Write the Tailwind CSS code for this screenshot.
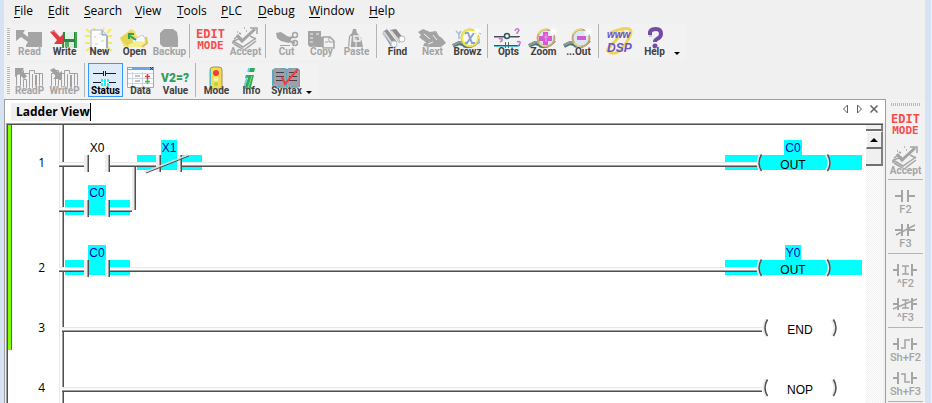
<!DOCTYPE html>
<html lang="en">
<head>
<meta charset="utf-8">
<title>Ladder View</title>
<script src="https://cdn.jsdelivr.net/npm/@tailwindcss/browser@4"></script>
</head>
<body class="h-screen overflow-hidden bg-[#f0f0f0] border-l-4 border-[#d6e3f2] flex flex-col font-['Open_Sans','Noto_Sans',sans-serif] text-black">

<svg class="hidden" aria-hidden="true">
  <symbol id="accept" viewBox="0 0 35 34">
    <g fill="none" stroke="#a4a4a4">
      <path d="M6 15l4-3M11 9l2 1M5 17l9-3M5 17l10 6 13-9M6 20l10 6 12-9M5 17v3M22 12l6 3" stroke-width="1.5"/>
      <path d="M9 11l5 6L27 5" stroke-width="3"/>
      <path d="M22 4h7v6" stroke-width="1.5"/>
      <path d="M16 4h1M9 8h1M18 7h1" stroke-width="1.5"/>
    </g>
  </symbol>
  <symbol id="book" viewBox="0 0 35 34">
    <path d="M4.500 10.500h3v-3h4v3h6v-3h5v3h8v16h-26z" fill="#f2f2f2" stroke="#a0a0a0"/>
    <path d="M8.500 11v16M11.500 16.500h3v10h-3zM17.500 8v19M20.500 11v16M27.500 11v16" fill="none" stroke="#a0a0a0"/>
    <path d="M23 12h2v14h-2z" fill="#a0a0a0"/>
  </symbol>
  <symbol id="lens" viewBox="0 0 35 34">
    <path d="M3 22l6-3 4 1 3-2" fill="none" stroke="#457b7b" stroke-width="4"/>
    <path d="M3 21l7-3 3 1" fill="none" stroke="#999" stroke-width="2"/>
    <path d="M13 22q9 4 16-5" fill="none" stroke="#417c78" stroke-width="2"/>
    <circle cx="20" cy="14" r="8.5" fill="#d9e8f4" stroke="#c6a878" stroke-width="2"/>
    <path d="M12 10q3-5 9-5M13 19q3 3 7 3" fill="none" stroke="#e6da7a" stroke-width="1.5"/>
    <path d="M27 4v8M23 8h8M24 5l6 6M30 5l-6 6" stroke="#fff" stroke-width="1.5"/>
  </symbol>
  <symbol id="bracketL" viewBox="0 0 7 18">
    <path d="M4.500 0.500Q-0.500 9 4.500 17" fill="none" stroke="#e8e8e8" stroke-width="3"/>
    <path d="M5.500 0.500Q0.500 9 5.500 17" fill="none" stroke="#505050" stroke-width="1.500"/>
  </symbol>
  <symbol id="bracketR" viewBox="0 0 7 18">
    <path d="M1.500 0.500Q6.500 9 1.500 17" fill="none" stroke="#e8e8e8" stroke-width="3"/>
    <path d="M2.500 0.500Q7.500 9 2.500 17" fill="none" stroke="#505050" stroke-width="1.500"/>
  </symbol>
  <symbol id="contact" viewBox="0 0 26 17">
    <path d="M0 0h3v17H0zM21 0h3v17h-3z" fill="#eee"/>
    <path d="M3 0h1v17H3zM24 0h1v17h-1z" fill="#a0a0a0"/>
    <path d="M4 0h1v17H4zM25 0h1v17h-1z" fill="#505050"/>
  </symbol>
  <symbol id="wire" viewBox="0 0 10 5" preserveAspectRatio="none">
    <path d="M0 0h10v1H0z" fill="#e8e8e8"/><path d="M0 1h10v2H0z" fill="#fbfbfb"/>
    <path d="M0 3h10v1H0z" fill="#a0a0a0"/><path d="M0 4h10v1H0z" fill="#505050"/>
  </symbol>
</svg>

<nav aria-label="Menu" class="h-6 shrink-0 pl-[2px] pb-[2px] flex items-center text-[12px] [&_button]:px-2 [&_button]:whitespace-nowrap [&_u]:underline [&_u]:decoration-1 [&_u]:underline-offset-2">
  <button class="w-[34px]"><u>F</u>ile</button>
  <button class="w-9"><u>E</u>dit</button>
  <button class="w-[51px]"><u>S</u>earch</button>
  <button class="w-[42px]"><u>V</u>iew</button>
  <button class="w-11"><u>T</u>ools</button>
  <button class="w-[37px]"><u>P</u>LC</button>
  <button class="w-[51px]"><u>D</u>ebug</button>
  <button class="w-[60px]"><u>W</u>indow</button>
  <button class="w-10"><u>H</u>elp</button>
</nav>

<div role="toolbar" aria-label="Main" class="self-start shrink-0 h-9 pl-[3px] pr-[6px] rounded bg-[#f2f2f2] flex items-start font-['Roboto',sans-serif] font-bold text-[10px] leading-[10px] text-[#404040] [&_button]:grid [&_button]:w-[35px] [&_button]:h-[34px] [&_button]:justify-items-center [&_button>*]:col-start-1 [&_button>*]:row-start-1 [&_span]:self-end [&_span]:mb-[1px] [&_span]:[text-shadow:0_0_1px_#f2f2f2,0_0_2px_#f2f2f2] [&_hr]:h-[34px] [&_hr]:w-px [&_hr]:border-0 [&_hr]:bg-[#b4b4b4] [&_hr]:ml-[2px] [&_hr]:mr-[3px]">
  <i class="w-[3px] h-[27px] mt-1 mr-[2px] bg-[repeating-linear-gradient(#b8b8b8_0_1px,#f2f2f2_1px_2px)]"></i>
  <button disabled class="text-[#a4a4a4]"><svg viewBox="0 0 35 34"><path fill="#a4a4a4" d="M4 6h9l-2 3 5 4V8h14v15H14v-2l2-3-7-5-5 4z"/></svg><span>Read</span></button>
  <button><svg viewBox="0 0 35 34"><path d="M16 8h14v16H15z" fill="#248a3c"/><path d="M18 8h9v7h-9z" fill="#e4efe7"/><path d="M17 18h10v6H17z" fill="#d8ead9"/><path d="M18 18h4v5h-4z" fill="#56ad62"/><path d="M29 8v16" stroke="#5dc073"/><path d="M3 8l4-2 6 7 3-3v10H7l3-4z" fill="#e23b42"/><path d="M4 8l3-1 6 6" stroke="#f58a88" fill="none"/></svg><span>Write</span></button>
  <button><svg viewBox="0 0 35 34"><path d="M4 5l5 4M3 12h5M3 19h5M4 27l5-4M12 4l1 3M22 4l-1 3M29 5l-4 4M30 12h-4M30 19h-4M30 27l-5-4" stroke="#f7ea58" stroke-width="2"/><path d="M9 6h11l5 5v15H9z" fill="#fcfcff" stroke="#a9b5c7"/><path d="M20 6v5h5" fill="#d7e2f2" stroke="#8090aa"/><path d="M12 13h2M17 10h2M19 17h3M13 20h3" stroke="#c4cfdf"/><path d="M25 12v12" stroke="#7b8ba4"/></svg><span>New</span></button>
  <button><svg viewBox="0 0 35 34"><path d="M3 14L14 5l4 2 2 5v11H7z" fill="#f0e26a"/><path d="M3 14l11-7 7 11-10 5z" fill="#e5d354"/><path d="M15 16l11-5 3 6-10 6z" fill="#f8fbfb" stroke="#c5d1cf"/><path d="M11 21l8-4 10 1-3 5H12z" fill="#f7ed8e"/><path d="M29 13l1 6-5 4" fill="none" stroke="#d9c94d" stroke-width="2"/><path d="M19 16l-6-4M12 15v-5h5" fill="none" stroke="#32a057" stroke-width="2"/></svg><span>Open</span></button>
  <button disabled class="text-[#a4a4a4]"><svg viewBox="0 0 35 34"><path fill="#a4a4a4" d="M8 9l4-4h9l4 3 1 6v9H11l-3-3z"/></svg><span>Backup</span></button>
  <hr>
  <button aria-label="Edit mode" class="content-start pt-[4px] font-['DejaVu_Sans_Mono',monospace] text-[#fa4b4b]"><b class="text-[12px] leading-[12px] font-bold text-center"><em class="block not-italic text-[12px]">EDIT</em><em class="block not-italic text-[11px]">MODE</em></b></button>
  <button disabled class="text-[#a4a4a4]"><svg viewBox="0 0 35 34"><use href="#accept"/></svg><span>Accept</span></button>
  <hr>
  <button disabled class="text-[#a4a4a4]"><svg viewBox="0 0 35 34"><path fill="#a4a4a4" d="M7 9l5-1 6 4 5 2-3 5-8-2-4-3zM11 21h10v1H11z"/><path d="M19 14l6-1M20 17l6 2" stroke="#a4a4a4" stroke-width="2"/><circle cx="26" cy="11" r="2.500" fill="none" stroke="#a4a4a4" stroke-width="1.500"/><circle cx="26" cy="19" r="2.500" fill="none" stroke="#a4a4a4" stroke-width="1.500"/></svg><span>Cut</span></button>
  <button disabled class="text-[#a4a4a4]"><svg viewBox="0 0 35 34"><path fill="#a4a4a4" d="M4 7h13v6h3v10H6l-2-2z"/><path d="M6 10h3M6 14h3M6 18h3M12 10h3" stroke="#f2f2f2"/><path d="M19 13h7l4 4v7H19z" fill="#f2f2f2" stroke="#a4a4a4" stroke-width="1.500"/><path d="M25 13v5h5M21 18h3" fill="none" stroke="#a4a4a4"/></svg><span>Copy</span></button>
  <button disabled class="text-[#a4a4a4]"><svg viewBox="0 0 35 34"><path fill="#a4a4a4" d="M13 9l1-4h3l1 4 4 4 2 10H9l1-11z"/><path d="M12 12l-1 11M15 12h6v5h-6zM20 13l2 3" fill="none" stroke="#f2f2f2" stroke-width="1.500"/><path d="M17 14v9" stroke="#f2f2f2"/></svg><span>Paste</span></button>
  <hr>
  <button><svg viewBox="0 0 35 34"><path d="M2 10l3-4 13 16-5 2z" fill="#bcd3ee"/><path d="M3 8l4-3 10 13-6 5z" fill="#929292"/><path d="M10 6l6-1 8 10-5 4z" fill="#8b8b8b"/><path d="M4 8l9 13M11 7l9 11" stroke="#d8d8d8" stroke-width="2"/><circle cx="22" cy="15" r="3" fill="#f9fbff" stroke="#bbb"/><circle cx="14" cy="20" r="3" fill="#f5f9ff" stroke="#b8c8dc"/></svg><span>Find</span></button>
  <button disabled class="text-[#a4a4a4]"><svg viewBox="0 0 35 34"><path fill="#a4a4a4" d="M3 8l5-3 7 3 6-1 3 5 3 2 4 5-5 4H13l-5-1 2-4-6-5 2-2z"/><path d="M9 10l6 5M18 11l4 5M13 20l5-2M7 16l4 3" stroke="#f2f2f2"/></svg><span>Next</span></button>
  <button><svg viewBox="0 0 35 34"><use href="#lens"/><circle cx="20" cy="14" r="8" fill="#fbfbf0" stroke="#ece84c" stroke-width="2"/><path d="M15 9h3l4 10h3M24 9l-7 10h-2" fill="none" stroke="#8ba3d4" stroke-width="2"/><path d="M6 7l3 3 2-3M9 10v5M29 15v5M28 8l3 2" fill="none" stroke="#a6bbdd" stroke-width="1.500"/><path d="M27 4v8M23 8h8" stroke="#fff" stroke-width="1.500"/></svg><span>Browz</span></button>
  <hr>
  <button><svg viewBox="0 0 35 34"><path d="M3 13h25M3 22h25" stroke="#4fc3d4" stroke-width="2"/><path d="M3 12.500h26M3 21.500h26" stroke="#454f58"/><circle cx="16" cy="12" r="2.500" fill="#e8f5f7" stroke="#31555c" stroke-width="1.500"/><path d="M14.500 18v6M17.500 18v6" stroke="#53666e"/><path d="M24 7q1-3 3-2t-1 4v1M8 15q2-1 3 0t-2 3M26 18q2-1 3 0t-2 4" fill="none" stroke="#c473d2" stroke-width="1.500"/></svg><span>Opts</span></button>
  <button><svg viewBox="0 0 35 34"><use href="#lens"/><path d="M17 8h5v4h4v5h-4v4h-5v-4h-4v-5h4z" fill="#d65bd2"/><path d="M18 13h4M20 10v8" stroke="#f09cea"/></svg><span>Zoom</span></button>
  <button><svg viewBox="0 0 35 34"><use href="#lens"/><path d="M16 12h9v4h-9z" fill="#d65bd2"/></svg><span>...Out</span></button>
  <hr>
  <button aria-label="www DSP"><svg viewBox="0 0 35 34"><path d="M8 9q14-6 19-4t-3 14-14 10-4-4 16-18" fill="none" stroke="#f2d25c" stroke-width="3"/><g fill="#6755c9" font-family="Liberation Sans,Arial,sans-serif" font-style="italic" font-weight="bold"><text x="5" y="14" font-size="10">www</text><text x="5" y="28" font-size="12">DSP</text></g></svg></button>
  <button><svg viewBox="0 0 35 34"><path d="M13 11V8q1-3 6-3t5 5q0 3-4 5-2 1-2 3" fill="none" stroke="#744aa5" stroke-width="4"/><circle cx="18" cy="22" r="2.500" fill="#744aa5"/><path d="M12 12h3" stroke="#67b9a0"/></svg><span>Help</span></button>
  <svg viewBox="0 0 6 4" class="w-[6px] h-1 mt-7 ml-[2px]"><path d="M0 0h6L3 3z"/></svg>
</div>

<div role="toolbar" aria-label="View" class="self-start shrink-0 h-[36px] mt-[3px] pl-[3px] pr-[6px] rounded bg-[#f2f2f2] flex items-start font-['Roboto',sans-serif] font-bold text-[10px] leading-[10px] text-[#404040] [&_button]:grid [&_button]:w-[35px] [&_button]:h-[34px] [&_button]:justify-items-center [&_button>*]:col-start-1 [&_button>*]:row-start-1 [&_span]:self-end [&_span]:mb-[1px] [&_hr]:h-[34px] [&_hr]:w-px [&_hr]:border-0 [&_hr]:bg-[#b4b4b4] [&_hr]:ml-[2px] [&_hr]:mr-[3px]">
  <i class="w-[3px] h-[27px] mt-1 mr-[2px] bg-[repeating-linear-gradient(#b8b8b8_0_1px,#f2f2f2_1px_2px)]"></i>
  <button disabled class="text-[#a4a4a4]"><svg viewBox="0 0 35 34"><use href="#book"/><path fill="#a0a0a0" d="M3 5h9l-2 3 5 5-3 3-5-5-4 3z"/></svg><span class="[text-shadow:0_0_1px_#f2f2f2,0_0_2px_#f2f2f2,0_0_2px_#f2f2f2]">ReadP</span></button>
  <button disabled class="text-[#a4a4a4]"><svg viewBox="0 0 35 34"><use href="#book"/><path fill="#a0a0a0" d="M3 7l4-2 5 5 3-2v8H6l3-3z"/></svg><span class="[text-shadow:0_0_1px_#f2f2f2,0_0_2px_#f2f2f2,0_0_2px_#f2f2f2]">WriteP</span></button>
  <hr>
  <button aria-pressed="true" class="bg-[#e0ebf8] outline outline-1 -outline-offset-1 outline-[#3399ff] text-black"><svg viewBox="0 0 35 34"><path d="M5 10.500h10M18 10.500h10M5 19.500h23" stroke="#101c30"/><path d="M15.500 8v5M17.500 8v5" stroke="#101c30"/><path d="M13 16h8v7h-8z" fill="#0ff"/><path d="M13 19.500h2M19 19.500h2M15.500 16v7M18.500 16v7" stroke="#fff"/></svg><span>Status</span></button>
  <button><svg viewBox="0 0 35 34"><path d="M4.500 4.500h26v20h-26z" fill="#fafcff" stroke="#7db2e6"/><path d="M4 4h27v3H4z" fill="#6ea6e0"/><path d="M5 5.500h4" stroke="#fff"/><path d="M27 4l3 3M30 4l-3 3" stroke="#2b3c62"/><path d="M5 10.500h25M5 15.500h25M5 20.500h25M9.500 9v14M19.500 9v14" stroke="#cdd6e0"/><path d="M12 13h5M12 18h5" stroke="#888"/><path d="M22 13.500h5M24.500 11v5" stroke="#e83d3d" stroke-width="1.500"/><path d="M22 18.500h5M24.500 16v5" stroke="#35c34a" stroke-width="1.500"/></svg><span>Data</span></button>
  <button><svg viewBox="0 0 35 34"><text x="3" y="19" font-family="Roboto,sans-serif" font-weight="900" font-size="12" fill="#2f9e5c">V2=?</text></svg><span>Value</span></button>
  <hr>
  <button><svg viewBox="0 0 35 34"><rect x="11" y="4" width="12" height="22" rx="3" fill="#f3dc4e" stroke="#a9915a"/><path d="M11.500 7v17" stroke="#4fc3c8"/><circle cx="17" cy="10" r="3" fill="#ee4040"/><circle cx="17" cy="16" r="2.500" fill="#f9f0a0"/><circle cx="17" cy="21" r="2" fill="#a6d84e"/></svg><span class="[text-shadow:0_0_1px_#f2f2f2]">Mode</span></button>
  <button><svg viewBox="0 0 35 34"><path d="M16 5h5l-1 4h-5zM12 12h8l-3 12h3l-1 2h-9l4-11h-3z" fill="#2fa95a"/><path d="M15 5l-1 4M13 14l-3 11" stroke="#58cfe0" stroke-width="1.500"/><path d="M18 13l-4 12" stroke="#8fdc74"/></svg><span class="[text-shadow:0_0_1px_#f2f2f2]">Info</span></button>
  <button><svg viewBox="0 0 35 34"><path d="M3 7l3-2h10l2 1 2-1h8l3 2v17l-3 1H6l-3-1z" fill="#55a9bd"/><path d="M5 6l5-1 7 2v17l-7-1-5 1zM18 7l6-2 6 1v18l-6-1-6 1z" fill="#a59ca6"/><path d="M7 9.500h8M7 13.500h8M7 17.500h8M20 9.500h8M20 13.500h8M20 17.500h8" stroke="#44404c"/><path d="M13 14l3 7L29 6" fill="none" stroke="#ee3c3c" stroke-width="2"/></svg><span class="[text-shadow:0_0_1px_#f2f2f2,0_0_2px_#f2f2f2]">Syntax</span></button>
  <svg viewBox="0 0 6 4" class="w-[6px] h-1 mt-7 ml-[2px]"><path d="M0 0h6L3 3z"/></svg>
</div>

<div class="flex-1 min-h-0 flex">
  <section class="flex-1 min-w-0 flex flex-col border border-b-0 border-[#a0a0a0] bg-[#f0f0f0]">
    <div class="h-[23px] shrink-0 pl-[6px] pr-[7px] pt-[3px] bg-white flex items-start">
      <button role="tab" aria-selected="true" class="h-[18px] pl-[5px] border-r border-black bg-[#f0f0f0] text-[12px] leading-[18px] font-bold whitespace-nowrap">Ladder View</button>
      <div class="ml-auto flex gap-[6px] [&_svg]:w-2 [&_svg]:h-[10px] [&_svg]:mt-px [&_path]:fill-none [&_path]:stroke-[#606060]">
        <button aria-label="Previous"><svg viewBox="0 0 8 10"><path d="M5.500 1v8L1.500 5z"/></svg></button>
        <button aria-label="Next"><svg viewBox="0 0 8 10"><path d="M1.500 1v8l4-4z"/></svg></button>
        <button aria-label="Close"><svg viewBox="0 0 8 10"><path d="M0.500 1.500l7 7M7.500 1.500l-7 7" stroke-width="1.500"/></svg></button>
      </div>
    </div>
    <div class="flex-1 min-h-0 ml-px mr-[2px] border-t border-l border-[#a0a0a0] flex">
      <div class="flex-1 min-w-0 border-t border-l border-[#505050] bg-white flex overflow-hidden">
        <i class="w-1 h-[225px] shrink-0 bg-[#80ff00] border-r border-[#3c7d10]"></i>
        <ol class="flex-1 min-w-0 text-[12px] [&_li]:flex [&_li]:h-[60px] [&_li]:shrink-0 [&_li>b]:w-[47px] [&_li>b]:pt-5 [&_li>b]:pr-[14px] [&_li>b]:text-right [&_li>b]:font-normal [&_li>b]:leading-4 [&_svg]:shrink-0 [&_svg]:overflow-visible [&_text]:[text-anchor:middle] [&_text]:font-['Liberation_Sans',Arial,sans-serif] [&_li>i]:flex-1 [&_li>i]:h-[5px] [&_li>i]:mt-[27px] [&_li>i]:bg-[linear-gradient(#e8e8e8_0_1px,#fbfbfb_1px_3px,#a0a0a0_3px_4px,#505050_4px)]">
          <li class="mt-[10px] mb-[45px]"><b>1</b>
            <svg width="143" height="105" viewBox="59 0 143 105">
              <path d="M59-10h1V105h-1z" fill="#e8e8e8"/><path d="M62-10h1V105h-1z" fill="#a0a0a0"/><path d="M63-10h1V105h-1z" fill="#505050"/>
              <path d="M137 20h65v15h-65zM161 5h16v30h-16zM65 65h65v15H65zM88 50h18v30H88z" fill="#0ff"/>
              <use href="#wire" x="59" y="27" width="25" height="5"/><use href="#wire" x="110" y="27" width="46" height="5"/><use href="#wire" x="182" y="27" width="20" height="5"/>
              <use href="#wire" x="59" y="72" width="25" height="5"/><use href="#wire" x="110" y="72" width="22" height="5"/>
              <path d="M132 32h2v44h-2z" fill="#eee"/><path d="M134 32h1v43h-1z" fill="#a0a0a0"/><path d="M135 32h1v43h-1z" fill="#505050"/>
              <use href="#contact" x="84" y="20" width="26" height="17"/><use href="#contact" x="156" y="20" width="26" height="17"/><use href="#contact" x="84" y="65" width="26" height="17"/>
              <path d="M145 37L188 20" stroke="#ddd" stroke-width="1.500"/><path d="M146 38L189 21" stroke="#505050"/>
              <text x="97" y="17">X0</text><text x="169" y="17" fill="#0000c0">X1</text><text x="97" y="62" fill="#0000c0">C0</text>
            </svg><i></i>
            <svg width="141" height="60" viewBox="725 0 141 60">
              <path d="M725 20h137v15H725zM784 5h18v15h-18z" fill="#0ff"/><use href="#wire" x="725" y="27" width="32" height="5"/>
              <use href="#bracketL" x="756" y="19" width="7" height="18"/><use href="#bracketR" x="825" y="19" width="7" height="18"/>
              <text x="793" y="17" fill="#0000c0">C0</text><text x="793" y="34">OUT</text>
            </svg></li>
          <li><b>2</b>
            <svg width="143" height="60" viewBox="59 0 143 60">
              <path d="M59 0h1v60h-1z" fill="#e8e8e8"/><path d="M62 0h1v60h-1z" fill="#a0a0a0"/><path d="M63 0h1v60h-1z" fill="#505050"/>
              <path d="M65 20h65v15H65zM88 5h18v30H88z" fill="#0ff"/>
              <use href="#wire" x="59" y="27" width="25" height="5"/><use href="#wire" x="110" y="27" width="92" height="5"/>
              <use href="#contact" x="84" y="20" width="26" height="17"/><text x="97" y="17" fill="#0000c0">C0</text>
            </svg><i></i>
            <svg width="141" height="60" viewBox="725 0 141 60">
              <path d="M725 20h137v15H725zM785 5h16v15h-16z" fill="#0ff"/><use href="#wire" x="725" y="27" width="32" height="5"/>
              <use href="#bracketL" x="756" y="19" width="7" height="18"/><use href="#bracketR" x="825" y="19" width="7" height="18"/>
              <text x="793" y="17" fill="#0000c0">Y0</text><text x="793" y="34">OUT</text>
            </svg></li>
          <li><b>3</b>
            <svg width="143" height="60" viewBox="59 0 143 60">
              <path d="M59 0h1v60h-1z" fill="#e8e8e8"/><path d="M62 0h1v60h-1z" fill="#a0a0a0"/><path d="M63 0h1v60h-1z" fill="#505050"/>
              <use href="#wire" x="62" y="27" width="140" height="5"/>
            </svg><i></i>
            <svg width="141" height="60" viewBox="725 0 141 60">
              <use href="#wire" x="725" y="27" width="37" height="5"/>
              <use href="#bracketL" x="762" y="19" width="7" height="18"/><use href="#bracketR" x="831" y="19" width="7" height="18"/><text x="800" y="34">END</text>
            </svg></li>
          <li><b>4</b>
            <svg width="143" height="60" viewBox="59 0 143 60">
              <path d="M59 0h1v60h-1z" fill="#e8e8e8"/><path d="M62 0h1v60h-1z" fill="#a0a0a0"/><path d="M63 0h1v60h-1z" fill="#505050"/>
              <use href="#wire" x="62" y="27" width="140" height="5"/>
            </svg><i></i>
            <svg width="141" height="60" viewBox="725 0 141 60">
              <use href="#wire" x="725" y="27" width="37" height="5"/>
              <use href="#bracketL" x="762" y="19" width="7" height="18"/><use href="#bracketR" x="831" y="19" width="7" height="18"/><text x="800" y="34">NOP</text>
            </svg></li>
        </ol>
      </div>
      <div class="w-[17px] shrink-0 border-t border-[#505050] bg-[repeating-conic-gradient(#f0f0f0_0_25%,#fff_0_50%)] bg-[length:2px_2px] [&>*]:block [&>*]:w-full [&>*]:bg-[#f0f0f0] [&>*]:border-r-2 [&>*]:border-b-2 [&>*]:border-r-[#808080] [&>*]:border-b-[#707070]">
        <i class="h-[6px]"></i>
        <button aria-label="Scroll up" class="h-[18px] border-t border-l border-white"><svg viewBox="0 0 8 4" class="w-2 h-1 mx-auto"><path d="M4 0l4 4H0z"/></svg></button>
        <i class="h-[17px]"></i>
      </div>
    </div>
  </section>

  <div role="toolbar" aria-label="Instructions" class="w-[39px] shrink-0 pt-1 bg-[#f2f2f2] flex flex-col items-center font-['Roboto',sans-serif] font-medium text-[11px] leading-[12px] text-[#a4a4a4] [&_button]:grid [&_button]:w-[35px] [&_button]:h-[34px] [&_button]:shrink-0 [&_button]:justify-items-center [&_button>*]:col-start-1 [&_button>*]:row-start-1 [&_span]:self-end [&_span]:mb-[1px] [&_hr]:w-[35px] [&_hr]:h-px [&_hr]:shrink-0 [&_hr]:border-0 [&_hr]:bg-[#b4b4b4] [&_hr]:mt-[2px] [&_hr]:mb-[3px]">
    <i class="w-[29px] h-[3px] mb-[3px] shrink-0 bg-[repeating-linear-gradient(90deg,#b8b8b8_0_1px,#f2f2f2_1px_2px)]"></i>
    <button aria-label="Edit mode" class="content-start pt-[4px] font-['DejaVu_Sans_Mono',monospace] text-[#fa4b4b]"><b class="text-[12px] leading-[12px] font-bold text-center"><em class="block not-italic text-[12px]">EDIT</em><em class="block not-italic text-[11px]">MODE</em></b></button>
    <button disabled><svg viewBox="0 0 35 34"><use href="#accept"/></svg><span class="text-[10px] leading-[10px] font-bold [text-shadow:0_0_1px_#f2f2f2,0_0_2px_#f2f2f2]">Accept</span></button>
    <hr>
    <button disabled><svg viewBox="0 0 35 34"><path d="M7 13h6M21 13h6M14 7v12M20 7v12" fill="none" stroke="#a4a4a4" stroke-width="2"/></svg><span>F2</span></button>
    <button disabled><svg viewBox="0 0 35 34"><path d="M7 13h6M21 13h6M14 7v12M20 7v12" fill="none" stroke="#a4a4a4" stroke-width="2"/><path d="M8 18L27 8" stroke="#a4a4a4" stroke-width="1.500"/></svg><span>F3</span></button>
    <hr>
    <button disabled><svg viewBox="0 0 35 34"><path d="M5 13h5M24 13h5M10 7v12M24 7v12" fill="none" stroke="#a4a4a4" stroke-width="2"/><path d="M14 9h7M14 17h7M17.500 9v8" stroke="#a4a4a4" stroke-width="1.500"/></svg><span>^F2</span></button>
    <button disabled><svg viewBox="0 0 35 34"><path d="M5 13h5M24 13h5M10 7v12M24 7v12" fill="none" stroke="#a4a4a4" stroke-width="2"/><path d="M14 9h7M14 17h7M17.500 9v8M5 18L29 8" stroke="#a4a4a4" stroke-width="1.500"/></svg><span>^F3</span></button>
    <hr>
    <button disabled><svg viewBox="0 0 35 34"><path d="M5 13h5M24 13h5M10 7v12M24 7v12" fill="none" stroke="#a4a4a4" stroke-width="2"/><path d="M13 17h4V9h5" fill="none" stroke="#a4a4a4" stroke-width="1.500"/></svg><span>Sh+F2</span></button>
    <button disabled><svg viewBox="0 0 35 34"><path d="M5 13h5M24 13h5M10 7v12M24 7v12" fill="none" stroke="#a4a4a4" stroke-width="2"/><path d="M13 9h4v8h5" fill="none" stroke="#a4a4a4" stroke-width="1.500"/></svg><span>Sh+F3</span></button>
    <hr>
  </div>
  <div class="w-[7px] shrink-0"></div>
</div>
<div aria-hidden="true" class="fixed inset-y-0 right-0 w-[7px] bg-[#d6e3f2] border-r border-[#eef3f9]"></div>
</body>
</html>
